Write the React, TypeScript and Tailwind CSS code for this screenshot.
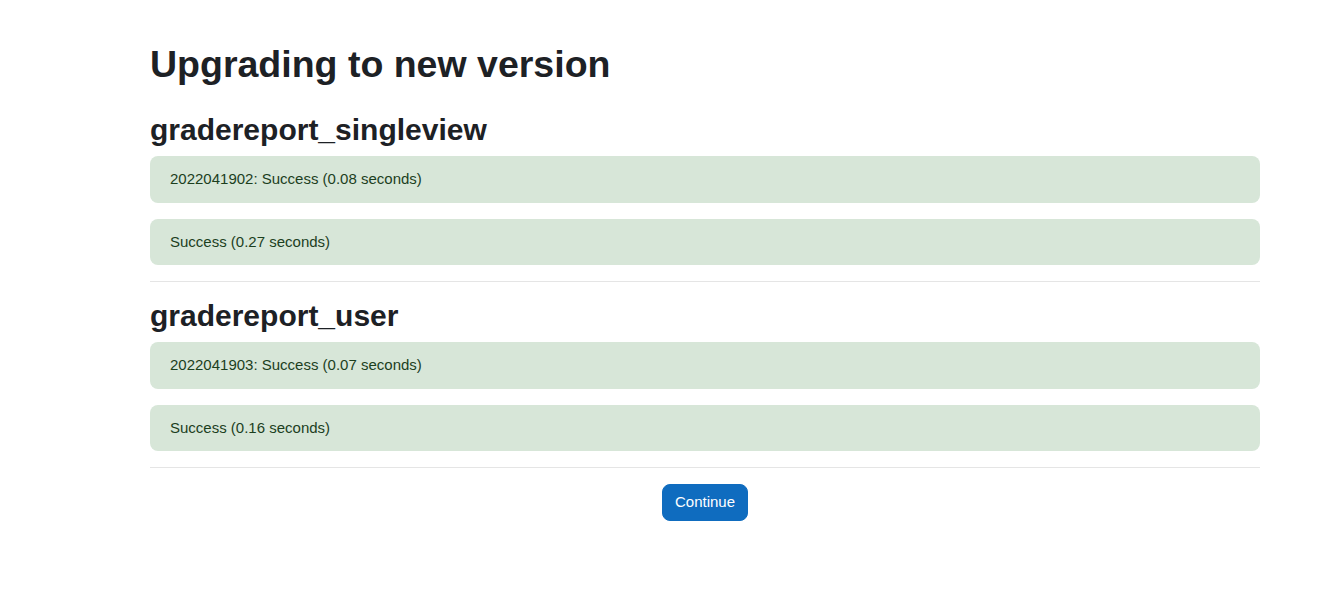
const sections = [
  {
    name: 'gradereport_singleview',
    results: ['2022041902: Success (0.08 seconds)', 'Success (0.27 seconds)'],
  },
  {
    name: 'gradereport_user',
    results: ['2022041903: Success (0.07 seconds)', 'Success (0.16 seconds)'],
  },
];

function Alert({ text }: { text: string }) {
  return (
    <div className="bg-[#d7e6d8] text-[#1c3f1e] rounded-lg px-5 py-3 text-[15px] leading-[22.5px] mb-4">
      {text}
    </div>
  );
}

export default function App() {
  return (
    <div
      className="min-h-screen bg-white text-[#1d2125]"
      style={{ fontFamily: '"Liberation Sans", Arial, sans-serif' }}
    >
      <div className="w-[1110px] ml-[150px] pt-[42px]">
        <h1 className="text-[37.5px] leading-[45px] font-bold mb-[25px]">Upgrading to new version</h1>

        {sections.map((s) => (
          <div key={s.name}>
            <h2 className="text-[30px] leading-[36px] font-bold mb-2">{s.name}</h2>
            {s.results.map((r) => (
              <Alert key={r} text={r} />
            ))}
            <hr className="border-0 border-t border-[#e5e5e5] mb-4" />
          </div>
        ))}

        <div className="flex justify-center">
          <button className="bg-[#0f6cbf] border border-[#0f6cbf] text-white text-[15px] leading-[22.5px] px-3 py-1.5 rounded-lg">
            Continue
          </button>
        </div>
      </div>
    </div>
  );
}
